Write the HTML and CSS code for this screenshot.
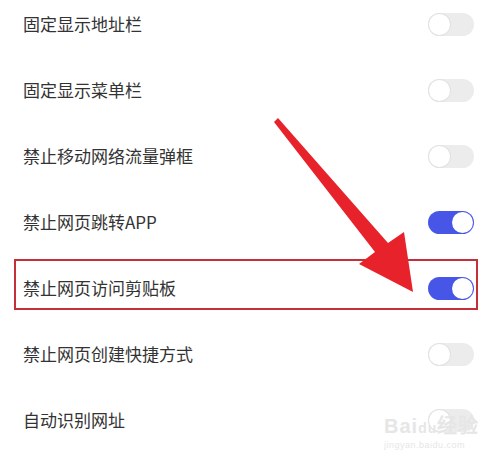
FILE: index.html
```html
<!DOCTYPE html>
<html lang="zh-CN">
<head>
  <meta charset="UTF-8">
  <title>网页设置</title>
  <link rel="stylesheet" href="styles.css">
</head>
<body>

<div class="settings">
  <div class="row">
    <span class="label">固定显示地址栏</span>
    <span class="switch"></span>
  </div>
  <div class="row">
    <span class="label">固定显示菜单栏</span>
    <span class="switch"></span>
  </div>
  <div class="row">
    <span class="label">禁止移动网络流量弹框</span>
    <span class="switch"></span>
  </div>
  <div class="row">
    <span class="label">禁止网页跳转APP</span>
    <span class="switch on"></span>
  </div>
  <div class="row marked">
    <div class="frame">
      <span class="label">禁止网页访问剪贴板</span>
      <span class="switch on"></span>
    </div>
  </div>
  <div class="row">
    <span class="label">禁止网页创建快捷方式</span>
    <span class="switch"></span>
  </div>
  <div class="row">
    <span class="label">自动识别网址</span>
    <span class="switch"></span>
  </div>
</div>

<!-- Annotation arrow -->
<svg class="arrow" width="500" height="461" viewBox="0 0 500 461">
  <polygon points="274,122 278,118 388,243 404,232 413,292 359,264 375,252" fill="#e8222a"/>
</svg>

<!-- Watermark -->
<div class="watermark">
  <div class="wm-logo"><span>Bai</span><span class="paw">du</span><span>经验</span></div>
  <div class="wm-url">jingyan.baidu.com</div>
</div>

</body>
</html>
```

FILE: styles.css
```css
* {
  box-sizing: border-box;
}

body {
  margin: 0;
  background-color: #fff;
  font-family: "Noto Sans CJK SC", "Noto Sans", sans-serif;
  color: #333;
  overflow: hidden;
  position: relative;
  height: 461px;
}

.settings {
  margin-top: -9px;
}

.row {
  height: 66px;
  display: flex;
  align-items: center;
  justify-content: space-between;
  padding: 0 26px 0 23px;
}

.label {
  font-size: 17px;
  line-height: 24px;
}

.switch {
  position: relative;
  width: 46px;
  height: 23px;
  border-radius: 12px;
  background-color: #ececec;
}

.switch::after {
  content: "";
  position: absolute;
  top: 1px;
  left: 1px;
  width: 21px;
  height: 21px;
  border-radius: 50%;
  background-color: #fff;
  box-shadow: 0 0 0 1px #e2e2e2;
}

.switch.on {
  background-color: #4756e6;
}

.switch.on::after {
  left: 24px;
  box-shadow: none;
}

/* Highlighted row */
.row.marked {
  align-items: flex-start;
  padding: 0 22px 0 14px;
}

.frame {
  margin-top: 4px;
  width: 100%;
  height: 51px;
  border: 2px solid #c4303a;
  padding: 7px 2px 0 7px;
  display: flex;
  align-items: center;
  justify-content: space-between;
}

.arrow {
  position: absolute;
  top: 0;
  left: 0;
}

.watermark {
  position: absolute;
  left: 384px;
  top: 410px;
  color: #e6e6e6;
  font-family: "Liberation Sans", sans-serif;
}

.wm-logo {
  font-size: 20px;
  font-weight: bold;
  letter-spacing: 1px;
}

.wm-logo .paw {
  font-size: 14px;
}

.wm-url {
  font-size: 9px;
  margin-top: 1px;
  letter-spacing: 0.5px;
}
```
